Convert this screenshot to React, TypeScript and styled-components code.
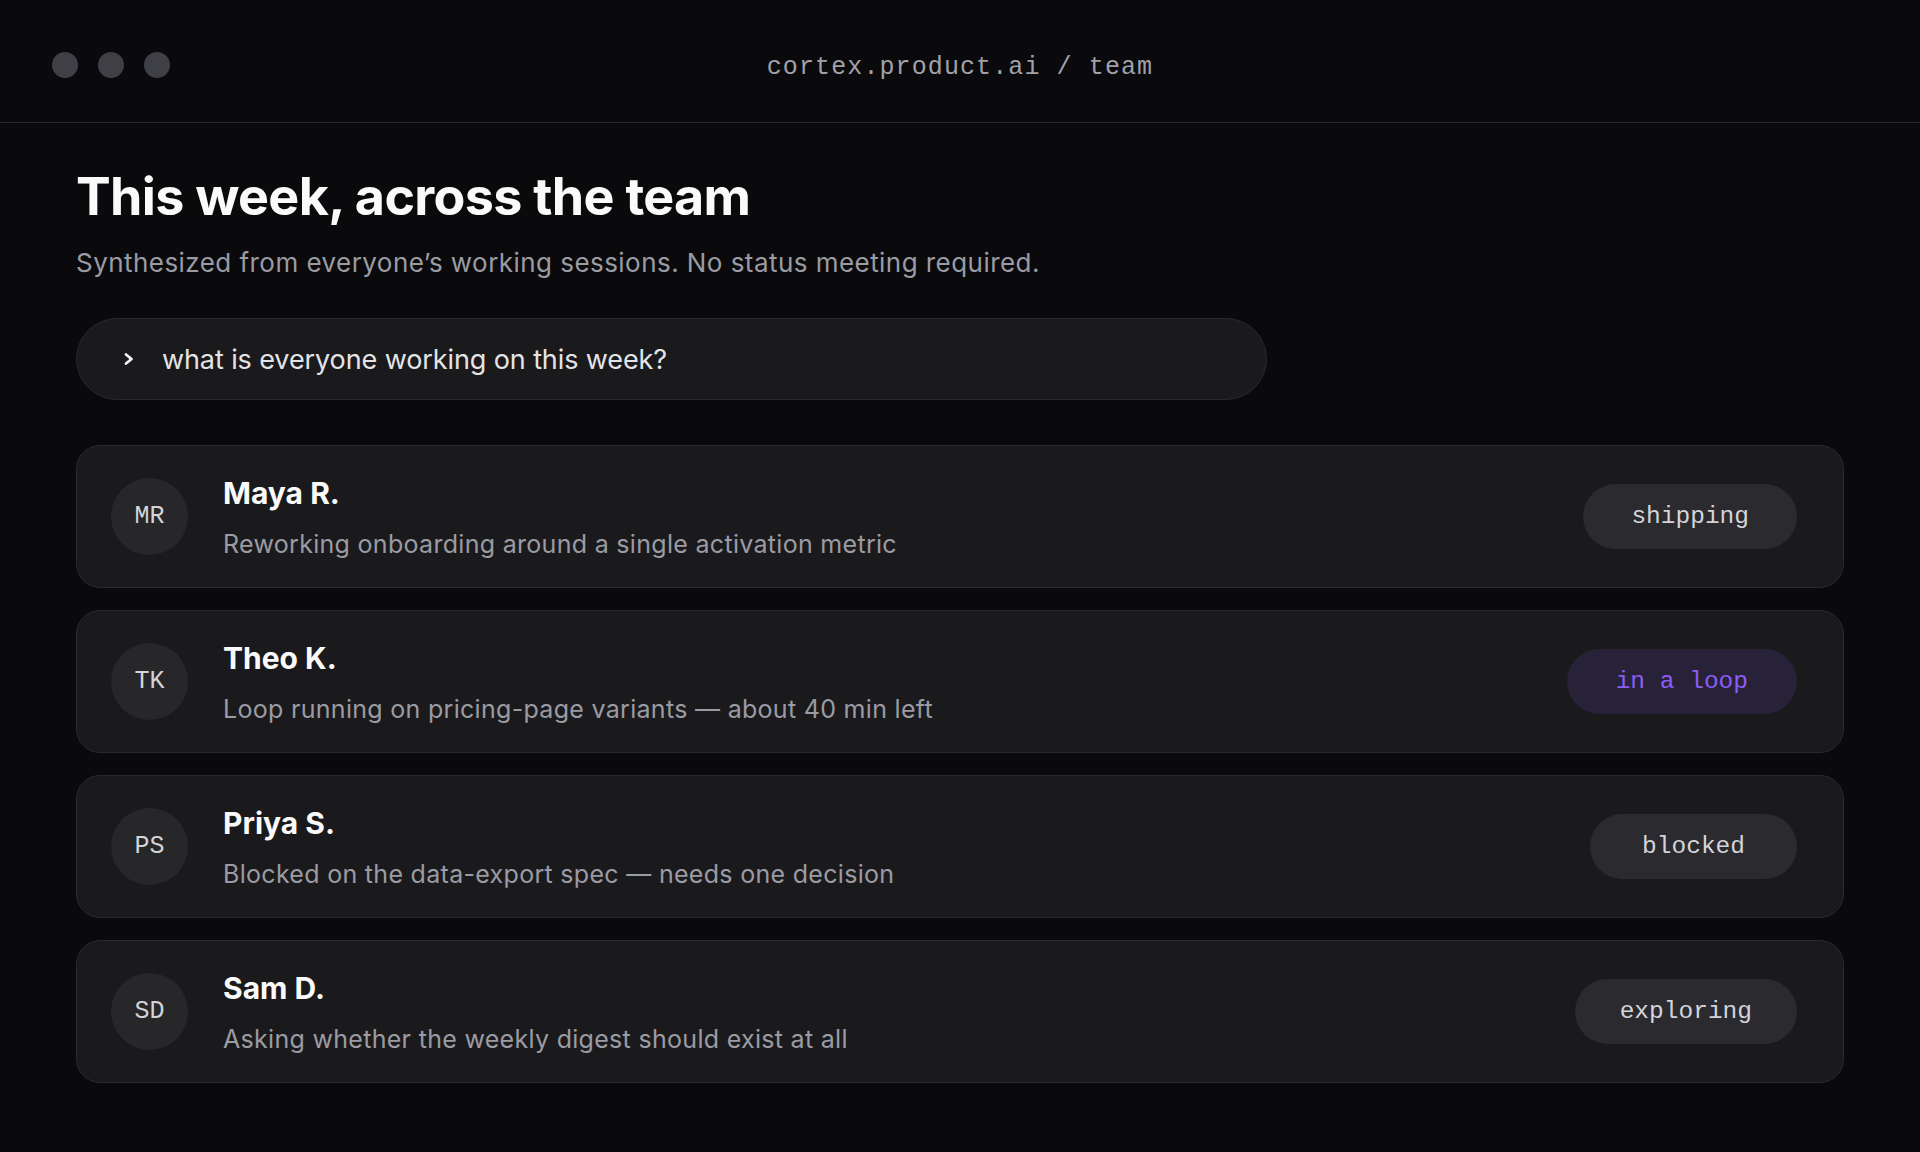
import React from "react";
import styled, { createGlobalStyle } from "styled-components";

const GlobalStyle = createGlobalStyle`
  html, body {
    margin: 0;
    padding: 0;
    background: #0a0a0c;
  }
  body {
    font-family: Inter, "Noto Sans", sans-serif;
    color: #f4f4f5;
    -webkit-font-smoothing: antialiased;
  }
`;

const Page = styled.div`
  min-height: 1152px;
  background: #0a0a0c;
  display: flex;
  flex-direction: column;
`;

const TitleBar = styled.header`
  display: grid;
  grid-template-columns: 1fr auto 1fr;
  align-items: center;
  height: 123px;
  padding: 8px 52px 0 52px;
  box-sizing: border-box;
  border-bottom: 1.5px solid #27272a;
`;

const Dots = styled.div`
  display: flex;
  gap: 20px;
`;

const Dot = styled.span`
  width: 26px;
  height: 26px;
  border-radius: 50%;
  background: #3f3f46;
`;

const Url = styled.div`
  font-family: "Liberation Mono", "DejaVu Sans Mono", monospace;
  font-size: 25px;
  letter-spacing: 1.1px;
  color: #a1a1aa;
  margin-top: 5px;
`;

const Main = styled.main`
  display: flex;
  flex-direction: column;
  padding: 43px 76px 0 76px;
`;

const Heading = styled.h1`
  margin: 0;
  font-size: 52px;
  line-height: 62px;
  font-weight: 700;
  letter-spacing: -0.013em;
  color: #fafafa;
`;

const Subtitle = styled.p`
  margin: 17px 0 0 0;
  font-size: 26px;
  line-height: 36px;
  font-weight: 400;
  letter-spacing: 0.45px;
  color: #9b9ba3;
`;

const Prompt = styled.div`
  display: flex;
  align-items: center;
  gap: 27px;
  width: 1191px;
  height: 82px;
  box-sizing: border-box;
  margin-top: 37px;
  padding: 0 46px;
  background: #1a1a1d;
  border: 1px solid #2a2a2e;
  border-radius: 41px;
  font-size: 27px;
  letter-spacing: -0.1px;
  color: #e4e4e7;
`;

const ChevronIcon = styled.svg`
  width: 12px;
  height: 14px;
  flex: none;
`;

const List = styled.div`
  display: flex;
  flex-direction: column;
  gap: 22px;
  margin-top: 45px;
`;

const Card = styled.div`
  display: flex;
  align-items: center;
  height: 143px;
  box-sizing: border-box;
  padding: 0 46px 0 34px;
  background: #1a1a1d;
  border: 1.5px solid #2a2a2e;
  border-radius: 24px;
`;

const Avatar = styled.div`
  width: 77px;
  height: 77px;
  flex: none;
  border-radius: 50%;
  background: #27272a;
  display: flex;
  align-items: center;
  justify-content: center;
  font-family: "Liberation Mono", "DejaVu Sans Mono", monospace;
  font-size: 25px;
  color: #d4d4d8;
`;

const Body = styled.div`
  display: flex;
  flex-direction: column;
  gap: 16px;
  margin-left: 35px;
  padding-top: 3px;
  flex: 1;
  min-width: 0;
`;

const Name = styled.div`
  font-size: 30px;
  line-height: 36px;
  font-weight: 700;
  letter-spacing: 0;
  color: #fafafa;
`;

const Desc = styled.div`
  font-size: 25px;
  line-height: 35px;
  letter-spacing: 0.3px;
  color: #9b9ba3;
`;

const Badge = styled.span<{ $tone: "neutral" | "violet"; $pad: number }>`
  flex: none;
  display: inline-flex;
  align-items: center;
  height: 65px;
  box-sizing: border-box;
  padding: 0 ${(p) => p.$pad}px;
  border-radius: 33px;
  font-family: "Liberation Mono", "DejaVu Sans Mono", monospace;
  font-size: 24.5px;
  background: ${(p) => (p.$tone === "violet" ? "#272238" : "#2a2a2f")};
  color: ${(p) => (p.$tone === "violet" ? "#8b5cf6" : "#d4d4d8")};
`;

type Member = {
  initials: string;
  name: string;
  desc: string;
  status: string;
  tone: "neutral" | "violet";
  pad: number;
};

const members: Member[] = [
  {
    initials: "MR",
    name: "Maya R.",
    desc: "Reworking onboarding around a single activation metric",
    status: "shipping",
    tone: "neutral",
    pad: 48,
  },
  {
    initials: "TK",
    name: "Theo K.",
    desc: "Loop running on pricing-page variants — about 40 min left",
    status: "in a loop",
    tone: "violet",
    pad: 49,
  },
  {
    initials: "PS",
    name: "Priya S.",
    desc: "Blocked on the data-export spec — needs one decision",
    status: "blocked",
    tone: "neutral",
    pad: 52,
  },
  {
    initials: "SD",
    name: "Sam D.",
    desc: "Asking whether the weekly digest should exist at all",
    status: "exploring",
    tone: "neutral",
    pad: 45,
  },
];

export default function App() {
  return (
    <Page>
      <GlobalStyle />
      <TitleBar>
        <Dots>
          <Dot />
          <Dot />
          <Dot />
        </Dots>
        <Url>cortex.product.ai / team</Url>
        <div />
      </TitleBar>
      <Main>
        <Heading>This week, across the team</Heading>
        <Subtitle>
          Synthesized from everyone’s working sessions. No status meeting required.
        </Subtitle>
        <Prompt>
          <ChevronIcon viewBox="0 0 12 14" fill="none">
            <path
              d="M3 2.5 L8.5 7 L3 11.5"
              stroke="#f4f4f5"
              strokeWidth="2.8"
              strokeLinecap="round"
              strokeLinejoin="round"
            />
          </ChevronIcon>
          <span>what is everyone working on this week?</span>
        </Prompt>
        <List>
          {members.map((m) => (
            <Card key={m.initials}>
              <Avatar>{m.initials}</Avatar>
              <Body>
                <Name>{m.name}</Name>
                <Desc>{m.desc}</Desc>
              </Body>
              <Badge $tone={m.tone} $pad={m.pad}>
                {m.status}
              </Badge>
            </Card>
          ))}
        </List>
      </Main>
    </Page>
  );
}
